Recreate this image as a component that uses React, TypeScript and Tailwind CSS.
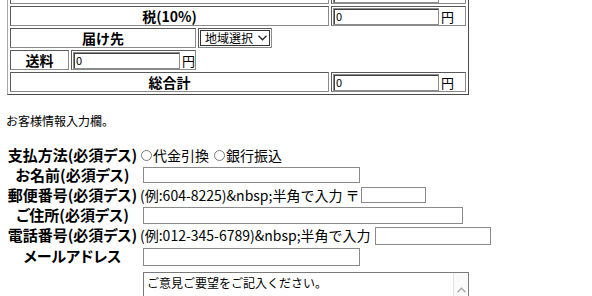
import React from "react";

const td = "border border-t-[#5a5a5a] border-l-[#5a5a5a] border-r-[#8a8a8a] border-b-[#8a8a8a] p-[1px] flex items-center";
const label = `${td} justify-center text-[14px] font-bold`;

function MoneyInput({ width, unit = true }: { width: string; unit?: boolean }) {
  return (
    <div className="flex items-center">
      <input
        readOnly
        defaultValue="0"
        className={`${width} h-[17px] border border-[#8c8c8c] shadow-[inset_1px_1px_0_#404040] px-[2px] text-[11px] leading-none text-black outline-none`}
      />
      {unit && <span className="ml-[2px] text-[13px] leading-none">円</span>}
    </div>
  );
}

function Radio({ text }: { text: string }) {
  return (
    <label className="flex items-center">
      <input
        type="radio"
        name="pay"
        className="appearance-none w-[11px] h-[11px] rounded-full border border-[#7a7a7a] bg-white mr-[1px]"
      />
      <span className="text-[14px]">{text}</span>
    </label>
  );
}

const field = "border border-[#8a8a8a] outline-none bg-white";

export default function App() {
  const rowLabel =
    "flex items-center justify-center font-bold text-[15px] whitespace-nowrap [font-feature-settings:'palt']";
  const rowBody = "flex items-center text-[14px] whitespace-nowrap";

  return (
    <div className="w-[592px] h-[296px] overflow-hidden bg-white text-black font-['Noto_Sans_CJK_JP',sans-serif]">
      {/* 金額テーブル (上の行はスクロールで切れている) */}
      <div className="-mt-[19px] ml-[7px] w-[462px] border border-t-[#a8a8a8] border-l-[#a8a8a8] border-r-[#4a4a4a] border-b-[#4a4a4a] p-[2px] grid grid-cols-[59px_125px_131px_135px] auto-rows-[20px] gap-[2px]">
        <div className={`${label} col-start-1 col-span-3`} />
        <div className={td}>
          <MoneyInput width="w-[106px]" unit={false} />
        </div>

        <div className={`${label} col-start-1 col-span-3`}>税(10%)</div>
        <div className={td}>
          <MoneyInput width="w-[106px]" />
        </div>

        <div className={`${label} col-start-1 col-span-2`}>届け先</div>
        <div className={`${td} justify-self-start`}>
          <div className="w-[70px] h-[16px] border border-[#333] flex items-center pl-[4px] text-[12px] leading-none">
            <span>地域選択</span>
            <svg width="9" height="6" viewBox="0 0 9 6" className="ml-[5px]">
              <polyline points="0.5,0.8 4.5,4.8 8.5,0.8" fill="none" stroke="#222" strokeWidth="1.3" />
            </svg>
          </div>
        </div>

        <div className={`${label} col-start-1`}>送料</div>
        <div className={td}>
          <MoneyInput width="w-[107px]" />
        </div>

        <div className={`${label} col-start-1 col-span-3`}>総合計</div>
        <div className={td}>
          <MoneyInput width="w-[106px]" />
        </div>
      </div>

      <p className="mt-[18px] pl-[6px] text-[12px] leading-[16px]">お客様情報入力欄。</p>

      {/* お客様情報 */}
      <div className="mt-[16px] pl-[7px] grid grid-cols-[131px_1fr] gap-x-[2px]">
        <div className={`${rowLabel} h-[20px]`}>支払方法(必須デス)</div>
        <div className={`${rowBody} h-[20px] ml-[1px] gap-[5px]`}>
          <Radio text="代金引換" />
          <Radio text="銀行振込" />
        </div>

        <div className={`${rowLabel} h-[20px]`}>お名前(必須デス)</div>
        <div className={`${rowBody} h-[20px]`}>
          <input className={`${field} ml-[3px] w-[217px] h-[16px]`} />
        </div>

        <div className={`${rowLabel} h-[20px]`}>郵便番号(必須デス)</div>
        <div className={`${rowBody} h-[20px]`}>
          <span>{"(例:604-8225)&nbsp;半角で入力 〒"}</span>
          <input className={`${field} ml-[1px] w-[65px] h-[16px]`} />
        </div>

        <div className={`${rowLabel} h-[20px]`}>ご住所(必須デス)</div>
        <div className={`${rowBody} h-[20px]`}>
          <input className={`${field} ml-[3px] w-[320px] h-[17px]`} />
        </div>

        <div className={`${rowLabel} h-[21px]`}>電話番号(必須デス)</div>
        <div className={`${rowBody} h-[21px]`}>
          <span>{"(例:012-345-6789)&nbsp;半角で入力"}</span>
          <input className={`${field} ml-[4px] w-[116px] h-[18px]`} />
        </div>

        <div className={`${rowLabel} h-[21px]`}>メールアドレス</div>
        <div className={`${rowBody} h-[21px]`}>
          <input className={`${field} ml-[3px] w-[217px] h-[18px]`} />
        </div>

        <div />
        <div className="mt-[5px] ml-[3px] w-[326px] h-[60px] border border-[#7a7a7a] flex">
          <textarea
            readOnly
            defaultValue="ご意見ご要望をご記入ください。"
            className="flex-1 resize-none overflow-hidden outline-none px-[3px] pt-[2px] text-[12px] leading-[16px]"
          />
          <div className="w-[15px] border-l border-[#e2e2e2] bg-[#fafafa] flex justify-center pt-[14px]">
            <svg width="9" height="6" viewBox="0 0 9 6">
              <polyline points="0.5,5.2 4.5,1.2 8.5,5.2" fill="none" stroke="#a6a6a6" strokeWidth="1.3" />
            </svg>
          </div>
        </div>
      </div>
    </div>
  );
}
